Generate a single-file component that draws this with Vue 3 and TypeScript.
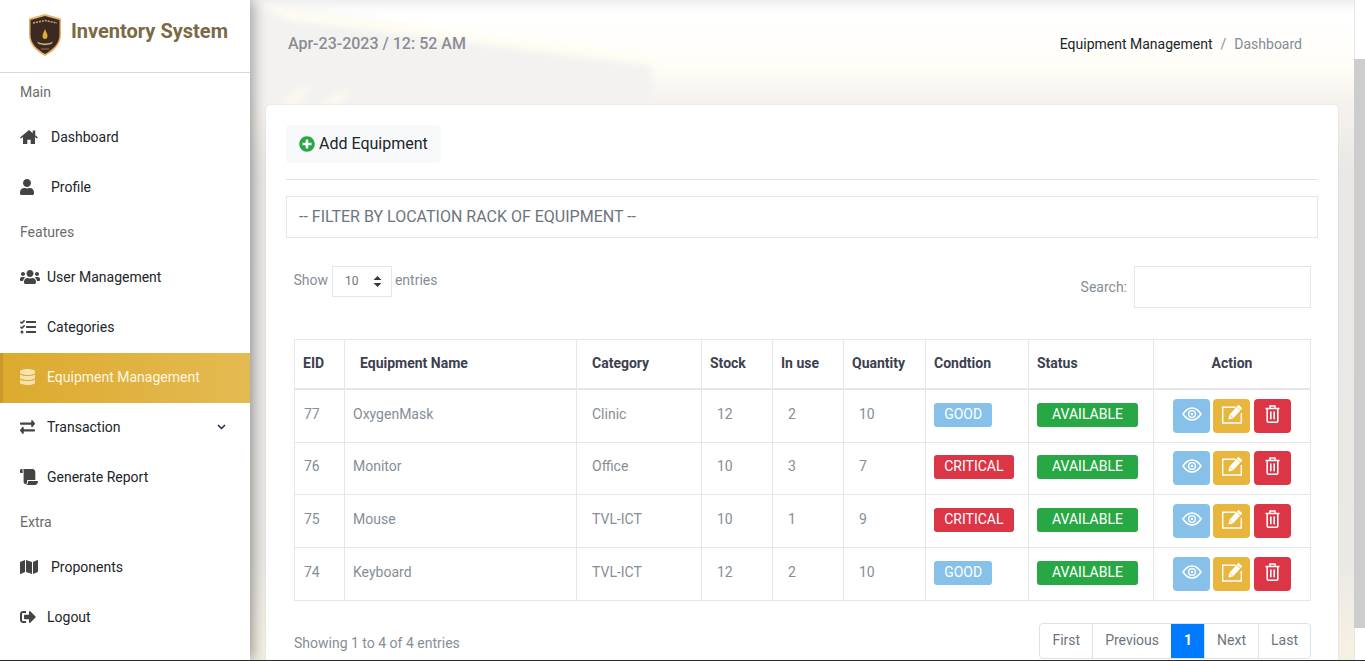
<script setup lang="ts">
type IconName = 'home' | 'user' | 'users' | 'tasks' | 'database' | 'exchange' | 'scroll' | 'map' | 'logout';

type NavEntry = {
  label: string;
  icon?: IconName;
  wide?: boolean;
  active?: boolean;
  caret?: boolean;
};

type EquipmentRow = {
  id: number;
  name: string;
  category: string;
  stock: number;
  inUse: number;
  quantity: number;
  condition: 'GOOD' | 'CRITICAL';
  height: number;
};

const icons: Record<IconName, { w: number; h?: number; vb: string; d: string }> = {
  home: {
    w: 18,
    vb: '0 0 576 512',
    d: 'M288 34 L408 132 V44 H488 V198 L576 270 L540 306 L480 256 V480 H342 V340 H234 V480 H96 V256 L36 306 L0 270 Z'
  },
  user: {
    w: 14,
    vb: '0 0 448 512',
    d: 'M224 256c70.7 0 128-57.3 128-128S294.7 0 224 0 96 57.3 96 128s57.3 128 128 128zm89.6 32h-16.7c-22.2 10.2-46.9 16-72.9 16s-50.6-5.8-72.9-16h-16.7C60.2 288 0 348.2 0 422.4V464c0 26.5 21.5 48 48 48h352c26.5 0 48-21.5 48-48v-41.6c0-74.2-60.2-134.4-134.4-134.4z'
  },
  users: {
    w: 20,
    vb: '0 0 640 512',
    d: 'M96 224c35.3 0 64-28.7 64-64s-28.7-64-64-64-64 28.7-64 64 28.7 64 64 64zm448 0c35.3 0 64-28.7 64-64s-28.7-64-64-64-64 28.7-64 64 28.7 64 64 64zm32 32h-64c-17.6 0-33.5 7.1-45.1 18.6 40.3 22.1 68.9 62 75.1 109.4h66c17.7 0 32-14.3 32-32v-32c0-35.3-28.7-64-64-64zm-256 0c61.9 0 112-50.1 112-112S381.9 32 320 32 208 82.1 208 144s50.1 112 112 112zm76.8 32h-8.3c-20.8 10-43.9 16-68.5 16s-47.6-6-68.5-16h-8.3C179.6 288 128 339.6 128 403.2V432c0 26.5 21.5 48 48 48h288c26.5 0 48-21.5 48-48v-28.8c0-63.6-51.6-115.2-115.2-115.2zm-223.7-13.4C161.5 263.1 145.6 256 128 256H64c-35.3 0-64 28.7-64 64v32c0 17.7 14.3 32 32 32h65.9c6.3-47.4 34.9-87.3 75.2-109.4z'
  },
  tasks: {
    w: 16,
    vb: '0 0 512 512',
    d: 'M139.61 35.5a12 12 0 0 0-17 0L58.93 98.81l-22.7-22.12a12 12 0 0 0-17 0L3.53 92.41a12 12 0 0 0 0 17l47.59 47.4a12.78 12.78 0 0 0 17.61 0l15.59-15.62L156.52 69a12.09 12.09 0 0 0 .09-17zm0 159.19a12 12 0 0 0-17 0l-63.68 63.72-22.7-22.1a12 12 0 0 0-17 0L3.53 252a12 12 0 0 0 0 17L51 316.5a12.77 12.77 0 0 0 17.6 0l15.7-15.69 72.2-72.22a12 12 0 0 0 .09-16.9zM64 368c-26.49 0-48.59 21.5-48.59 48S37.53 464 64 464a48 48 0 0 0 0-96zm432 16H208a16 16 0 0 0-16 16v32a16 16 0 0 0 16 16h288a16 16 0 0 0 16-16v-32a16 16 0 0 0-16-16zm0-320H208a16 16 0 0 0-16 16v32a16 16 0 0 0 16 16h288a16 16 0 0 0 16-16V80a16 16 0 0 0-16-16zm0 160H208a16 16 0 0 0-16 16v32a16 16 0 0 0 16 16h288a16 16 0 0 0 16-16v-32a16 16 0 0 0-16-16z'
  },
  database: {
    w: 15,
    vb: '0 0 448 512',
    d: 'M448 73.143v45.714C448 159.143 347.667 192 224 192S0 159.143 0 118.857V73.143C0 32.857 100.333 0 224 0s224 32.857 224 73.143zM448 176v102.857C448 319.143 347.667 352 224 352S0 319.143 0 278.857V176c48.125 33.143 136.208 48.572 224 48.572S399.874 209.143 448 176zm0 160v102.857C448 479.143 347.667 512 224 512S0 479.143 0 438.857V336c48.125 33.143 136.208 48.572 224 48.572S399.874 369.143 448 336z'
  },
  exchange: {
    w: 15,
    h: 14,
    vb: '0 56 512 400',
    d: 'M0 168v-16c0-13.255 10.745-24 24-24h360V80c0-21.367 25.899-32.042 40.971-16.971l80 80c9.372 9.373 9.372 24.569 0 33.941l-80 80C409.956 271.982 384 261.456 384 240v-48H24c-13.255 0-24-10.745-24-24zm488 152H128v-48c0-21.314-25.862-32.08-40.971-16.971l-80 80c-9.372 9.373-9.372 24.569 0 33.941l80 80C102.057 463.997 128 453.437 128 432v-48h360c13.255 0 24-10.745 24-24v-16c0-13.255-10.745-24-24-24z'
  },
  scroll: {
    w: 18,
    vb: '0 0 640 512',
    d: 'M48 0C21.53 0 0 21.53 0 48v64c0 8.84 7.16 16 16 16h80V48C96 21.53 74.47 0 48 0zm208 412.57V352h288V96c0-52.94-43.06-96-96-96H111.59C121.74 13.41 128 29.92 128 48v368c0 38.87 34.65 69.65 74.75 63.12C234.22 474 256 444.46 256 412.57zM288 384v32c0 52.93-43.06 96-96 96h336c61.86 0 112-50.14 112-112 0-8.84-7.16-16-16-16H288z'
  },
  map: {
    w: 18,
    vb: '0 0 576 512',
    d: 'M0 117.66v346.32c0 11.32 11.43 19.06 21.94 14.86L160 416V32L20.12 87.95A32.006 32.006 0 0 0 0 117.66zM192 416l192 64V96L192 32v384zM554.06 33.16L416 96v384l139.88-55.95A31.996 31.996 0 0 0 576 394.34V48.02c0-11.32-11.43-19.06-21.94-14.86z'
  },
  logout: {
    w: 16,
    vb: '0 0 512 512',
    d: 'M497 273L329 441c-15 15-41 4.5-41-17v-96H152c-13.3 0-24-10.7-24-24v-96c0-13.3 10.7-24 24-24h136V88c0-21.4 25.9-32 41-17l168 168c9.3 9.4 9.3 24.6 0 34zM192 436v-40c0-6.6-5.4-12-12-12H96c-17.7 0-32-14.3-32-32V160c0-17.7 14.3-32 32-32h84c6.6 0 12-5.4 12-12V76c0-6.6-5.4-12-12-12H96c-53 0-96 43-96 96v192c0 53 43 96 96 96h84c6.6 0 12-5.4 12-12z'
  }
};

const nav: NavEntry[] = [
  { label: 'Main' },
  { label: 'Dashboard', icon: 'home', wide: true },
  { label: 'Profile', icon: 'user', wide: true },
  { label: 'Features' },
  { label: 'User Management', icon: 'users' },
  { label: 'Categories', icon: 'tasks' },
  { label: 'Equipment Management', icon: 'database', active: true },
  { label: 'Transaction', icon: 'exchange', caret: true },
  { label: 'Generate Report', icon: 'scroll' },
  { label: 'Extra' },
  { label: 'Proponents', icon: 'map', wide: true },
  { label: 'Logout', icon: 'logout' }
];

const columns = ['EID', 'Equipment Name', 'Category', 'Stock', 'In use', 'Quantity', 'Condtion', 'Status', 'Action'];

const rows: EquipmentRow[] = [
  { id: 77, name: 'OxygenMask', category: 'Clinic', stock: 12, inUse: 2, quantity: 10, condition: 'GOOD', height: 53 },
  { id: 76, name: 'Monitor', category: 'Office', stock: 10, inUse: 3, quantity: 7, condition: 'CRITICAL', height: 52 },
  { id: 75, name: 'Mouse', category: 'TVL-ICT', stock: 10, inUse: 1, quantity: 9, condition: 'CRITICAL', height: 53 },
  { id: 74, name: 'Keyboard', category: 'TVL-ICT', stock: 12, inUse: 2, quantity: 10, condition: 'GOOD', height: 53 }
];

const pages = ['First', 'Previous', '1', 'Next', 'Last'];
</script>

<template>
  <div class="page">
    <aside class="sidebar">
      <div class="brand">
        <svg class="logo" width="32" height="42" viewBox="0 0 32 42">
          <path d="M16 0 L32 4.5 V21 C32 31 24 38 16 42 C8 38 0 31 0 21 V4.5 Z" fill="#e6b365" />
          <path d="M16 2 L30.5 6 V21 C30.5 30 23 36 16 40 C9 36 1.5 30 1.5 21 V6 Z" fill="#3c2a22" />
          <path d="M4 9 L16 6.5 L28 9" fill="none" stroke="#b9a57c" stroke-width="1.6" stroke-dasharray="2 1" />
          <path d="M16 15 C17 18 18.5 19.5 18.5 22 C18.5 24 17.5 25 16 25 C14.5 25 13.5 24 13.5 22 C13.5 19.5 15 18 16 15 Z" fill="#e0a92f" />
          <path d="M8 27.5 C12 30 20 30 24 27.5 L22.5 30 C18 31.5 14 31.5 9.5 30 Z" fill="#c4ab76" />
          <path d="M12 35 H20" stroke="#8f7750" stroke-width="1" />
        </svg>
        <span class="brand-name">Inventory System</span>
      </div>
      <template v-for="entry in nav" :key="entry.label">
        <div v-if="!entry.icon" class="nav-label">{{ entry.label }}</div>
        <a v-else class="nav-item" :class="{ active: entry.active, wide: entry.wide }">
          <span class="nav-icon">
            <svg
              :width="icons[entry.icon].w"
              :height="icons[entry.icon].h ?? 16"
              :viewBox="icons[entry.icon].vb"
              preserveAspectRatio="none"
            >
              <path :d="icons[entry.icon].d" fill="currentColor" />
            </svg>
          </span>
          <span class="nav-text">{{ entry.label }}</span>
          <svg v-if="entry.caret" class="caret" width="9" height="6" viewBox="0 0 9 6">
            <path d="M1 1 L4.5 4.5 L8 1" fill="none" stroke="#1c2550" stroke-width="1.5" />
          </svg>
        </a>
      </template>
    </aside>

    <main class="main">
      <svg class="backdrop" width="1104" height="660" viewBox="0 0 1104 660">
        <polygon points="0,0 400,62 405,105 0,105" fill="#f3f2f0" />
        <polygon points="10,6 400,56 404,66 40,20" fill="#fffdf2" />
        <path d="M30 105 Q45 88 60 84 L48 105 Z M70 105 Q85 92 100 90 L90 105 Z" fill="#fbf9ee" />
      </svg>

      <header class="topbar">
        <span class="clock">Apr-23-2023 / 12: 52 AM</span>
        <nav class="crumbs">
          <span class="crumb-link">Equipment Management</span>
          <span class="crumb-sep">/</span>
          <span class="crumb-here">Dashboard</span>
        </nav>
      </header>

      <section class="card">
        <button class="add-btn">
          <svg width="16" height="16" viewBox="0 0 512 512">
            <circle cx="256" cy="256" r="170" fill="#fff" />
            <path
              d="M256 8C119 8 8 119 8 256s111 248 248 248 248-111 248-248S393 8 256 8zm144 276c0 6.6-5.4 12-12 12h-92v92c0 6.6-5.4 12-12 12h-56c-6.6 0-12-5.4-12-12v-92h-92c-6.6 0-12-5.4-12-12v-56c0-6.6 5.4-12 12-12h92v-92c0-6.6 5.4-12 12-12h56c6.6 0 12 5.4 12 12v92h92c6.6 0 12 5.4 12 12v56z"
              fill="#28a745"
            />
          </svg>
          Add Equipment
        </button>
        <hr class="rule" />
        <div class="rack-filter">-- FILTER BY LOCATION RACK OF EQUIPMENT --</div>

        <div class="datatable">
          <div class="dt-top">
            <div class="dt-length">
              Show
              <span class="length-select">
                <span>10</span>
                <svg width="9" height="13" viewBox="0 0 9 13">
                  <path d="M4.5 1 L8.5 5 H0.5 Z M4.5 12 L8.5 8 H0.5 Z" fill="#343a40" />
                </svg>
              </span>
              entries
            </div>
            <label class="dt-search">
              Search:
              <span class="search-box"></span>
            </label>
          </div>

          <table class="grid">
            <colgroup>
              <col class="c-id" />
              <col class="c-name" />
              <col class="c-cat" />
              <col class="c-num" />
              <col class="c-num" />
              <col class="c-qty" />
              <col class="c-cond" />
              <col class="c-status" />
              <col class="c-action" />
            </colgroup>
            <thead>
              <tr>
                <th v-for="(col, i) in columns" :key="col" :class="{ 'th-name': i === 1, 'th-cat': i === 2, 'th-action': i === 8 }">
                  {{ col }}
                </th>
              </tr>
            </thead>
            <tbody>
              <tr v-for="row in rows" :key="row.id" :height="row.height">
                <td class="td-id">{{ row.id }}</td>
                <td>{{ row.name }}</td>
                <td class="td-pad">{{ row.category }}</td>
                <td class="td-pad">{{ row.stock }}</td>
                <td class="td-pad">{{ row.inUse }}</td>
                <td class="td-pad">{{ row.quantity }}</td>
                <td class="td-badge">
                  <span class="badge" :class="row.condition === 'GOOD' ? 'badge-good' : 'badge-bad'">{{ row.condition }}</span>
                </td>
                <td class="td-badge"><span class="badge badge-ok">AVAILABLE</span></td>
                <td class="td-actions">
                  <div class="actions">
                    <span class="act act-view">
                      <svg width="20" height="14" viewBox="0 0 20 14" fill="none" stroke="#fff">
                        <path d="M1 7 C4 2.5 7 1 10 1 C13 1 16 2.5 19 7 C16 11.5 13 13 10 13 C7 13 4 11.5 1 7 Z" stroke-width="1.6" />
                        <circle cx="10" cy="7" r="3.4" stroke-width="1.3" />
                        <circle cx="10" cy="7" r="1.2" fill="#fff" stroke="none" />
                      </svg>
                    </span>
                    <span class="act act-edit">
                      <svg width="22" height="22" viewBox="0 0 22 22" fill="none" stroke="#fff">
                        <path d="M14.5 4.2 H1.7 V20 H20.3 V10" stroke-width="1.4" />
                        <path d="M7.5 16.5 L8.2 12 L17.5 1.8 L21.3 5.2 L12 15.5 Z" fill="#fff" stroke="none" />
                        <path d="M15.6 3.9 L19.3 7.4 M8.4 11.8 L11.9 15.1" stroke="#e8b63c" stroke-width="0.7" />
                      </svg>
                    </span>
                    <span class="act act-del">
                      <svg width="15" height="18" viewBox="0 0 15 18" fill="none" stroke="#fff">
                        <path d="M0.5 3.4 H14.5 M5 3 V1 H10 V3" stroke-width="1.5" />
                        <path d="M2.2 4 V16 Q2.2 17.2 3.4 17.2 H11.6 Q12.8 17.2 12.8 16 V4" stroke-width="1.6" />
                        <path d="M5.8 6.5 V14.2 M9.2 6.5 V14.2" stroke-width="1.6" />
                      </svg>
                    </span>
                  </div>
                </td>
              </tr>
            </tbody>
          </table>

          <div class="dt-bottom">
            <span class="dt-info">Showing 1 to 4 of 4 entries</span>
            <div class="pager">
              <span v-for="page in pages" :key="page" class="pager-item" :class="{ current: page === '1' }">{{ page }}</span>
            </div>
          </div>
        </div>
      </section>
    </main>

    <div class="scrollbar">
      <div class="scroll-gap top"></div>
      <div class="scroll-thumb"></div>
      <div class="scroll-gap"></div>
    </div>
  </div>
</template>

<style>
html,
body {
  margin: 0;
  overflow: hidden;
}
</style>

<style scoped>
.page {
  display: flex;
  box-sizing: border-box;
  height: 661px;
  overflow: hidden;
  border-bottom: 1px solid #2c2c2c;
  font-family: Roboto, "Liberation Sans", sans-serif;
  font-size: 14px;
  color: #212529;
  background: #fff;
}

.sidebar {
  position: relative;
  z-index: 2;
  flex: 0 0 250px;
  background: #fff;
  box-shadow: 2px 0 14px rgba(0, 0, 0, 0.42);
}

.brand {
  display: flex;
  align-items: center;
  gap: 10px;
  box-sizing: border-box;
  height: 73px;
  padding: 0 0 3px 29px;
  border-bottom: 1px solid #d9d9d9;
}

.logo {
  flex: none;
}

.brand-name {
  margin-bottom: 8px;
  font-size: 20px;
  font-weight: 700;
  color: #7a6a45;
}

.nav-label {
  display: flex;
  align-items: center;
  box-sizing: border-box;
  height: 40px;
  padding: 0 0 2px 20px;
  color: #6b6b6b;
}

.nav-label:first-of-type {
  height: 39.5px;
}

.nav-item {
  display: flex;
  align-items: center;
  box-sizing: border-box;
  height: 50px;
  padding: 0 24px 2px 20px;
  color: #212529;
}

.nav-icon {
  display: flex;
  align-items: center;
  width: 27px;
  color: #444;
}

.wide .nav-icon {
  width: 31px;
}

.nav-text {
  flex: 1;
}

.active {
  padding-left: 17px;
  border-left: 3px solid #c99a2b;
  background: linear-gradient(90deg, #dcaa2e, #e4ba52);
  color: #fdf6e3;
}

.active .nav-icon {
  color: #f6e2b0;
}

.main {
  position: relative;
  flex: 1;
  min-width: 0;
  padding: 0 16px;
  overflow: hidden;
  background: linear-gradient(180deg, #efefef 0, #fafafa 8px, #fff 16px, #fffefa 50px, #fffdf6 66px, #f6f3ef 100px, #eae8e6 170px, #ebe9e6 560px, #f4f0e4 640px);
}

.backdrop {
  position: absolute;
  top: 0;
  left: 0;
  filter: blur(3px);
}

.topbar {
  position: relative;
  display: flex;
  align-items: center;
  justify-content: space-between;
  box-sizing: border-box;
  height: 86px;
  margin-bottom: 19px;
  padding: 0 36px 0 22px;
}

.clock {
  font-size: 16px;
  font-weight: 500;
  color: #8a8d92;
}

.crumbs {
  display: flex;
  gap: 8px;
  padding-top: 2px;
}

.crumb-sep,
.crumb-here {
  color: #858c93;
}

.card {
  position: relative;
  padding: 20px;
  min-height: 600px;
  background: #fff;
  border-radius: 4px;
  box-shadow: 0 0 2px rgba(0, 0, 0, 0.12);
}

.add-btn {
  display: flex;
  align-items: center;
  gap: 4px;
  height: 38px;
  padding: 0 13px 2px;
  border: 0;
  border-radius: 4px;
  background: #f8f9fa;
  font: inherit;
  font-size: 16px;
  color: #212529;
}

.add-btn svg {
  margin-top: 2px;
}

.rule {
  height: 1px;
  margin: 16px 0;
  border: 0;
  background: #e3e3e3;
}

.rack-filter {
  display: flex;
  align-items: center;
  box-sizing: border-box;
  height: 42px;
  padding: 0 0 2px 12px;
  border: 1px solid #e6e6e6;
  font-size: 16px;
  color: #6c757d;
}

.datatable {
  margin-top: 28px;
  padding: 0 7px 0 8px;
  color: #868e96;
}

.dt-top {
  display: flex;
  justify-content: space-between;
  height: 42px;
  margin-bottom: 31px;
}

.dt-length {
  display: flex;
  align-items: flex-start;
  gap: 4px;
  margin-left: -0.6px;
  line-height: 29px;
}

.length-select {
  display: flex;
  align-items: center;
  justify-content: space-between;
  box-sizing: border-box;
  width: 60px;
  height: 31px;
  margin-right: -1px;
  padding: 0 9px 0 12px;
  border: 1px solid #e6e6e6;
  font-size: 12px;
  color: #6c757d;
}

.dt-search {
  display: flex;
  align-items: center;
  gap: 7px;
}

.search-box {
  display: block;
  box-sizing: border-box;
  width: 177px;
  height: 42px;
  border: 1px solid #e6e6e6;
}

.grid {
  width: 1017px;
  table-layout: fixed;
  border-collapse: collapse;
}

.c-id {
  width: 50px;
}

.c-name {
  width: 232px;
}

.c-cat {
  width: 125px;
}

.c-num {
  width: 71px;
}

.c-qty {
  width: 82px;
}

.c-cond {
  width: 103px;
}

.c-status {
  width: 125px;
}

.c-action {
  width: 157px;
}

th,
td {
  padding: 0 8px 4px;
  border: 1px solid #e6e6e6;
  text-align: left;
  vertical-align: middle;
  white-space: nowrap;
}

th {
  height: 46px;
  padding-bottom: 2px;
  border-bottom-width: 2px;
  font-weight: 700;
  color: #3d4050;
}

.th-name,
.th-cat {
  padding-left: 15px;
}

.th-action {
  text-align: center;
}

.td-id {
  padding-left: 9px;
}

.td-pad {
  padding-left: 15px;
}

.td-badge {
  padding-bottom: 2px;
}

.td-actions {
  padding-bottom: 0;
}

.badge {
  display: inline-block;
  box-sizing: border-box;
  height: 24px;
  padding: 0 10.2px;
  border-radius: 3px;
  line-height: 23px;
  color: #fff;
  vertical-align: middle;
}

.badge-good {
  background: #87c1ea;
}

.badge-bad {
  background: #dc3545;
}

.badge-ok {
  padding: 0 15px;
  background: #28a745;
}

.actions {
  display: flex;
  justify-content: center;
  gap: 3px;
}

.act {
  display: flex;
  align-items: center;
  justify-content: center;
  box-sizing: border-box;
  width: 37px;
  height: 34px;
  padding-bottom: 4px;
  border-radius: 4px;
}

.act-view {
  background: #87c1ea;
}

.act-edit {
  background: #e8b63c;
}

.act-del {
  margin-left: 1px;
  background: #dc3545;
}

.dt-bottom {
  display: flex;
  align-items: center;
  justify-content: space-between;
  margin-top: 22px;
}

.dt-info {
  padding-top: 4px;
}

.pager {
  display: flex;
  height: 36px;
  border: 1px solid #dee2e6;
  border-radius: 4px;
  box-sizing: border-box;
  overflow: hidden;
}

.pager-item {
  display: flex;
  align-items: center;
  padding: 0 12px 2px;
  border-left: 1px solid #dee2e6;
  color: #6c757d;
}

.pager-item:first-child {
  border-left: 0;
}

.current {
  border-left-color: #007bff;
  background: #007bff;
  font-weight: 700;
  color: #fff;
}

.scrollbar {
  position: relative;
  z-index: 1;
  display: flex;
  flex: 0 0 11px;
  flex-direction: column;
}

.scroll-gap {
  flex: 1;
  border-left: 1px solid #e8e8e8;
  background: #fff;
}

.scroll-gap.top {
  flex: 0 0 59px;
}

.scroll-thumb {
  flex: 0 0 569px;
  background: #cdcdcd;
}
</style>
